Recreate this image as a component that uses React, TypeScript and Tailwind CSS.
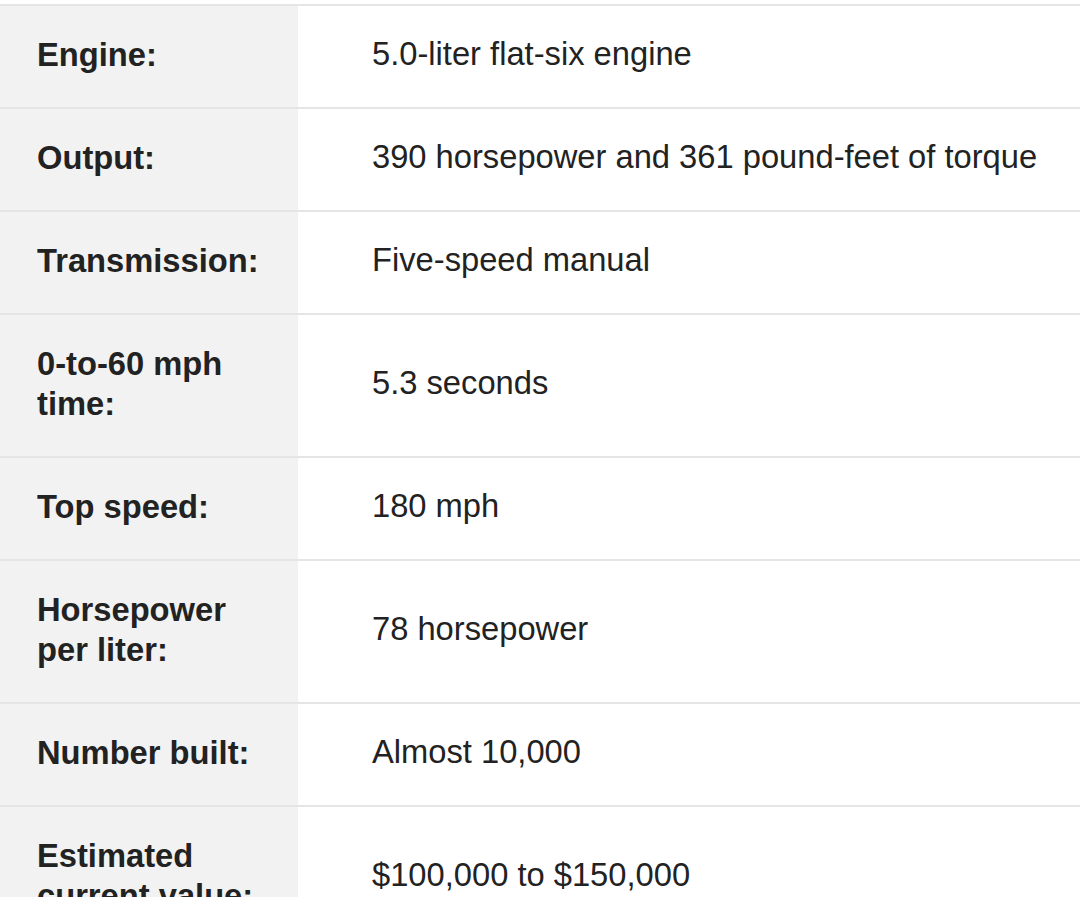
import React from "react";

const rows: { label: string[]; value: string }[] = [
  { label: ["Engine:"], value: "5.0-liter flat-six engine" },
  { label: ["Output:"], value: "390 horsepower and 361 pound-feet of torque" },
  { label: ["Transmission:"], value: "Five-speed manual" },
  { label: ["0-to-60 mph", "time:"], value: "5.3 seconds" },
  { label: ["Top speed:"], value: "180 mph" },
  { label: ["Horsepower", "per liter:"], value: "78 horsepower" },
  { label: ["Number built:"], value: "Almost 10,000" },
  { label: ["Estimated", "current value:"], value: "$100,000 to $150,000" },
];

export default function App() {
  return (
    <div
      className="w-[1080px] h-[897px] overflow-hidden bg-white text-[#222222]"
      style={{ fontFamily: '"Liberation Sans", Arial, Helvetica, sans-serif' }}
    >
      <div className="mt-[4px] border-t-2 border-[#e5e5e5]">
        {rows.map((r, i) => (
          <div key={i} className="flex border-b-2 border-[#e5e5e5]">
            <div className="w-[298px] shrink-0 bg-[#f2f2f2] pl-[37px] pr-4 pt-[28.5px] pb-[32.5px] text-[32.7px] leading-[40px] font-bold">
              {r.label.map((l, j) => (
                <div key={j}>{l}</div>
              ))}
            </div>
            <div className="flex-1 flex items-center pl-[74px] pb-[5px] text-[32.7px] leading-[40px]">
              {r.value}
            </div>
          </div>
        ))}
      </div>
    </div>
  );
}
